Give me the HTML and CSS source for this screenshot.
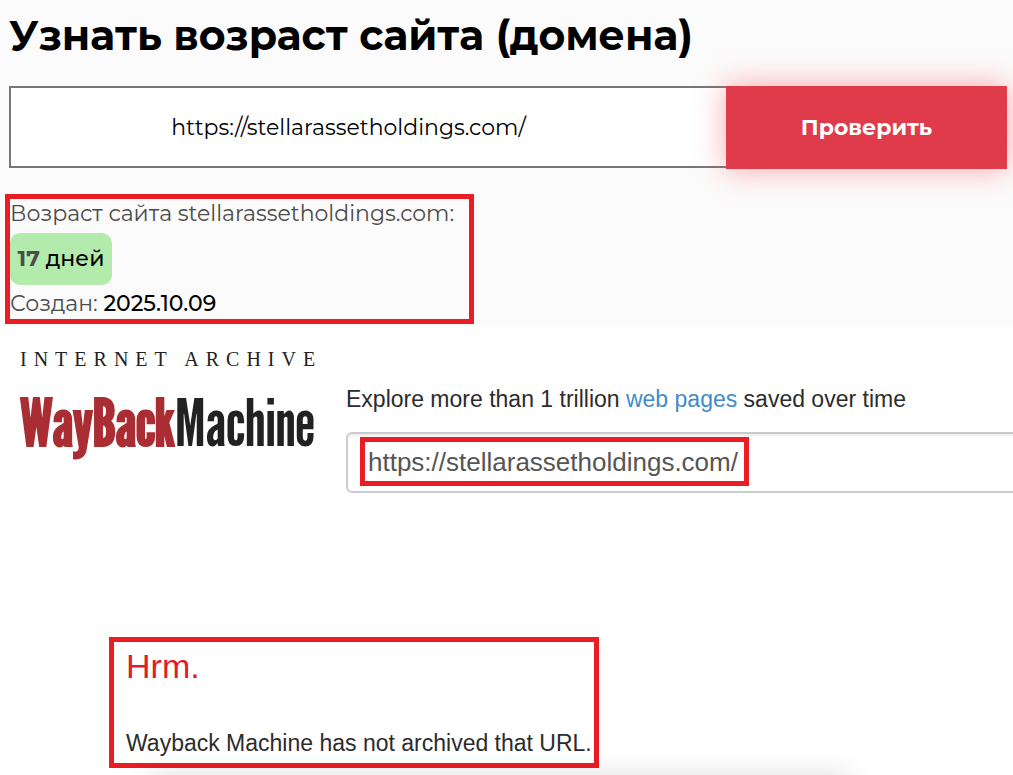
FILE: index.html
```html
<!DOCTYPE html>
<html lang="ru">

<head>
    <meta charset="UTF-8">
    <meta name="viewport" content="width=device-width, initial-scale=1.0">
    <title>Узнать возраст сайта (домена)</title>
    <link rel="stylesheet" href="styles.css">
</head>

<body>
    <section class="age">
        <h1 class="age-title">Узнать возраст сайта (домена)</h1>
        <form class="age-form">
            <input class="age-input" type="text" value="https://stellarassetholdings.com/" aria-label="Адрес сайта">
            <button class="age-button" type="button">Проверить</button>
        </form>
        <div class="mark age-result">
            <p>Возраст сайта stellarassetholdings.com:</p>
            <p class="days"><b>17</b> дней</p>
            <p>Создан: <span class="date">2025.10.09</span></p>
        </div>
    </section>
    <section class="wayback" lang="en">
        <a class="logo" href="#">
            <span class="logo-top">INTERNET ARCHIVE</span>
            <span class="logo-name"><span class="logo-red">WayBack</span>Machine</span>
        </a>
        <div class="search">
            <label for="url">Explore more than 1 trillion <a href="#">web pages</a> saved over time</label>
            <div class="search-field">
                <input id="url" class="search-input" type="text" value="https://stellarassetholdings.com/">
                <span class="mark search-mark"></span>
            </div>
        </div>
    </section>
    <section class="mark error" lang="en">
        <h2>Hrm.</h2>
        <p>Wayback Machine has not archived that URL.</p>
    </section>
    <div class="bottom-shadow"></div>
</body>

</html>
```

FILE: styles.css
```css
* {
    box-sizing: border-box;
    margin: 0;
    padding: 0;
}

body {
    min-height: 100vh;
    overflow: hidden;
    display: flex;
    flex-direction: column;
    background-color: #fff;
    color: #2c2c2c;
    font-family: "Liberation Sans", Arial, sans-serif;
}

.mark {
    border: 5px solid #eb1c24;
}

/* age check */
.age {
    padding: 7px 6px 2px 5px;
    background-color: #fbfbfb;
    color: #4c4c4c;
    font-family: Montserrat, Inter, sans-serif;
    font-size: 22px;
}

.age-title {
    padding-left: 4px;
    color: #000;
    font-size: 41px;
    line-height: 56px;
}

.age-form {
    display: flex;
    height: 83px;
    margin: 23px 0 25px 4px;
}

.age-input {
    flex: 1;
    min-width: 0;
    height: 82px;
    padding-right: 40px;
    border: 2px solid #777;
    border-right: 0;
    background-color: #fff;
    color: #000;
    font: inherit;
    text-align: center;
}

.age-button {
    width: 281px;
    border: 0;
    background-color: #df3b4a;
    box-shadow: 0 0 30px rgba(255, 80, 80, .5);
    color: #fff;
    font: inherit;
    font-weight: 700;
}

.age-result {
    width: 469px;
    line-height: 30px;
    white-space: nowrap;
}

.days {
    width: 102px;
    margin: 4px 0;
    border-radius: 10px;
    background-color: #b3ebad;
    color: #000;
    line-height: 52px;
    text-align: center;
    font-weight: 500;
}

.days b {
    color: #4c4c4c;
}

.date {
    color: #000;
    font-weight: 500;
}

/* wayback machine */
.wayback {
    display: flex;
    align-items: flex-start;
    gap: 30px;
    padding: 23px 0 0 20px;
    font-size: 23px;
}

.logo {
    width: 296px;
    color: #222;
    text-decoration: none;
}

.logo-top {
    display: block;
    font-family: "Liberation Serif", "Times New Roman", serif;
    font-size: 20px;
    line-height: 20px;
    letter-spacing: 7px;
    white-space: nowrap;
}

.logo-name {
    display: block;
    font-family: "League Gothic", Anton, sans-serif;
    font-size: 64px;
    line-height: 108px;
}

.logo-red {
    color: #a92d32;
    font-weight: 700;
}

.search {
    flex: 1;
    padding-top: 34px;
}

.search label {
    display: block;
    line-height: 32px;
    white-space: nowrap;
}

.search label a {
    color: #428bca;
    text-decoration: none;
}

.search-field {
    position: relative;
    margin: 17px -8px 0 0;
}

.search-input {
    display: block;
    width: 100%;
    height: 61px;
    padding: 0 20px;
    border: 2px solid #ccc;
    border-radius: 6px;
    box-shadow: inset 0 2px 2px rgba(0, 0, 0, .08);
    background-color: #fff;
    color: #555;
    font: inherit;
    font-size: 26px;
}

.search-mark {
    position: absolute;
    top: 5px;
    left: 14px;
    width: 389px;
    height: 49px;
}

/* not archived message */
.error {
    width: 490px;
    margin: 144px 0 0 109px;
    padding: 4px 12px;
    font-size: 23px;
    white-space: nowrap;
}

.error h2 {
    color: #dc1f2b;
    font-size: 34px;
    font-weight: 400;
    line-height: 40px;
}

.error p {
    margin-top: 41px;
    line-height: 32px;
}

.bottom-shadow {
    width: 700px;
    height: 20px;
    margin: 12px 0 -32px 150px;
    box-shadow: 0 0 30px rgba(0, 0, 0, .2);
}
```
